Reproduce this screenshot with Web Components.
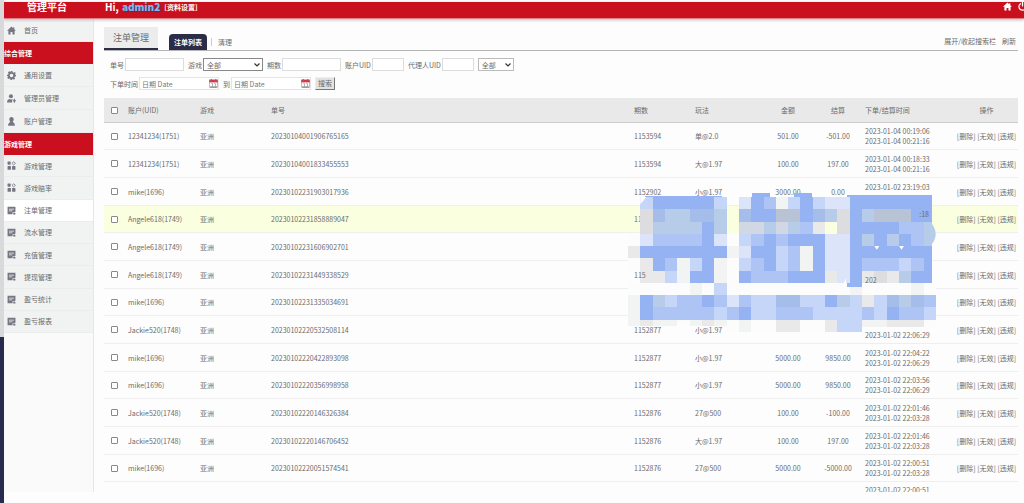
<!DOCTYPE html>
<html lang="zh-CN">
<head>
<meta charset="utf-8">
<title>管理平台</title>
<style>
html, body { margin: 0; height: 100%; }
body { background: #fdfdfd; color: #6b6b6b; font: 7px/10px "Noto Sans CJK SC", "Noto Sans", sans-serif; overflow: hidden; }
</style>
</head>
<body>
<admin-app></admin-app>
<script>
const define = (name, html, setup) => {
  const template = document.createElement('template');
  template.innerHTML = '<style>:host,*{box-sizing:border-box}a{color:inherit;text-decoration:none}</style>' + html;
  customElements.define(name, class extends HTMLElement {
    connectedCallback() {
      if (this.shadowRoot) return;
      this.attachShadow({ mode: 'open' }).append(template.content.cloneNode(true));
      if (setup) setup.call(this, this.shadowRoot);
    }
  });
};

const icons = {
  home: '<path d="M8 1 0 8.500h2.500V15H6.300v-4.500h3.400V15h3.800V8.500H16L13 5.700V2h-2v1.800z"/>',
  gear: '<path fill-rule="evenodd" d="M6.500 0h3l.5 2.300 1.500.7 2-1.300 2 2-1.200 2 .6 1.400L16 6.500v3l-2.200.6-.7 1.400 1.300 2-2 2-2-1.300-1.400.6-.5 2.200h-3L6 13.800l-1.500-.6-2 1.200-2-2 1.200-2-.6-1.400L0 9.500v-3L2.200 6l.6-1.500-1.200-2 2-2 2 1.200L6 2.200zM8 4.800a3.200 3.200 0 1 0 0 6.400 3.200 3.200 0 0 0 0-6.400z"/>',
  userplus: '<circle cx="7" cy="4" r="3.600"/><path d="M0 15c0-4 2-6 5-6.300L7 10l2-1.300c1 .1 1.800.4 2.400.9H9v5.400z"/><path d="M12 8.500h2V11h2v2h-2v2.500h-2V13h-2v-2h2z"/>',
  user: '<path d="M8 0c2.600 0 4 1.800 4 4.200 0 1.800-.6 3-1.600 4 .1 1.200.6 1.600 1.600 2.200 1.400.8 1.900 2.300 2 5.100H2c.1-2.800.6-4.300 2-5.100 1-.6 1.500-1 1.600-2.200-1-1-1.600-2.200-1.600-4C4 1.800 5.400 0 8 0z"/>',
  grid: '<rect x="1" y="1" width="5.500" height="5.500" rx="1"/><path fill="none" stroke="currentColor" stroke-width="1.500" d="M11.800 1.500 15 4.200l-3.200 2.800-3-2.800z"/><rect x="1" y="9" width="6" height="6.500" rx="1"/><rect x="9" y="9" width="6" height="6.500" rx="1"/>',
  note: '<path fill-rule="evenodd" d="M1 1.500h14V10l-2 1-3 .3-.3 3.200H1zM3.500 5v1.200h9V5zm0 3v1.200h6V8z"/><path d="m11 12.500 2-1 2 1.200v2.300h-4z"/>',
  power: '<path fill="none" stroke="currentColor" stroke-width="2.200" stroke-linecap="round" d="M4.500 3a6.300 6.300 0 1 0 7 0M8 0v7"/>',
  calendar: '<path fill="#fff" stroke="#888" d="M1 3h14v12H1z"/><path fill="#d2374a" d="M.5 1h15v5H.5z"/><path fill="#777" d="M4 8h3v5H6V9H4zm5 0h3v5h-1V9H9zM3 0h2v3H3zm8 0h2v3h-2zM2 13.500h12V15H2z"/>'
};
define('ui-icon', '<style>:host{display:block;width:9px;height:9px;flex:none}svg{display:block;width:100%;height:100%}</style><svg viewBox="0 0 16 16" fill="currentColor" aria-hidden="true"></svg>',
  function (root) { root.querySelector('svg').innerHTML = icons[this.getAttribute('name')]; });

define('top-bar', `<style>
:host{display:flex;height:17px;background:#ca101e;color:#fff;border-bottom:1px solid #e0808a;box-shadow:0 1px 3px #bbb;position:relative}
h1{margin:0;width:101px;padding-left:23px;font-size:10px;line-height:10px;font-weight:700}
p{margin:0;flex:1;display:flex;gap:3px;font-size:10px;line-height:10px;font-weight:700}
b{color:#7db8ee;text-shadow:1px 1px 1px #27436d}
.set{font-size:7px;margin-left:1px}
nav{display:flex;gap:6px;flex:none;width:21px;overflow:hidden}
</style><h1>管理平台</h1><p><span>Hi,</span><b>admin2</b><a class="set" href="#">[资料设置]</a></p>
<nav><a href="#" aria-label="首页"><ui-icon name="home"></ui-icon></a><a href="#" aria-label="退出"><ui-icon name="power"></ui-icon></a></nav>`);

define('nav-item', `<style>
:host{display:flex;flex:1;border-bottom:1px solid #ebedec}
:host([active]){background:#fff}
a{display:flex;flex:1;align-items:center;gap:8px;padding-left:3px}
ui-icon{color:#777783}
</style><a href="#"><ui-icon></ui-icon><span><slot></slot></span></a>`,
  function (root) {
    const icon = document.createElement('ui-icon');
    icon.setAttribute('name', this.getAttribute('icon'));
    root.querySelector('ui-icon').replaceWith(icon);
  });

define('side-nav', `<style>
:host{display:block;background:#fafafa;border-right:1px solid #e6e6e6;overflow:hidden}
h2{margin:0;height:22px;background:#ca101e;color:#fff;font-size:7px;line-height:22px;font-weight:700}
div{display:flex;flex-direction:column;background:#f1f3f2}
.one{height:23px}.three{height:69px}.eight{height:178px}
</style>
<div class="one"><nav-item icon="home">首页</nav-item></div>
<h2>综合管理</h2>
<div class="three"><nav-item icon="gear">通用设置</nav-item><nav-item icon="userplus">管理员管理</nav-item><nav-item icon="user">账户管理</nav-item></div>
<h2>游戏管理</h2>
<div class="eight"><nav-item icon="grid">游戏管理</nav-item><nav-item icon="grid">游戏赔率</nav-item><nav-item icon="note" active>注单管理</nav-item><nav-item icon="note">流水管理</nav-item><nav-item icon="note">充值管理</nav-item><nav-item icon="note">提现管理</nav-item><nav-item icon="note">盈亏统计</nav-item><nav-item icon="note">盈亏报表</nav-item></div>`);

define('page-tabs', `<style>
:host{display:flex;align-items:flex-end;height:24px;border-bottom:1px solid #b4b4b4}
h2{margin:0 11px 0 0;width:54px;height:23px;background:#ececec;border-bottom:2px solid #2a2c48;font-size:9px;line-height:22px;font-weight:400;text-align:center}
.on{width:38px;height:16px;background:#2a2c48;color:#fff;border-radius:4px 4px 0 0;line-height:16px;text-align:center;font-weight:700}
.off{margin-left:4px;padding-left:6px;line-height:8px;margin-bottom:4px;border-left:1px solid #ccc}
nav{display:flex;gap:6px;margin-left:auto;padding:0 2px 4px 0}
</style><h2>注单管理</h2><a class="on" href="#">注单列表</a><a class="off" href="#">清理</a>
<nav><a href="#">展开/收起搜索栏</a><a href="#">刷新</a></nav>`);

define('filter-bar', `<style>
:host{display:block;padding:7px 6px 0}
form{display:flex;flex-direction:column;gap:6px;align-items:flex-start}
.row{display:flex;gap:4px;align-items:center}
label{display:flex;align-items:center;gap:1px}
input,select,button{font:inherit;color:inherit;height:13px;border:1px solid #ddd;border-radius:0;background:#fff;padding:0 3px;margin:0;outline:0}
input{width:59px}.s input{width:32px}
input::placeholder{color:#777;opacity:1}
select{appearance:none;width:60px;border-color:#888;background:#fff url("data:image/svg+xml,%3Csvg xmlns='http://www.w3.org/2000/svg' viewBox='0 0 6 4'%3E%3Cpath d='M.5.5 3 3 5.500.5' fill='none' stroke='%23333' stroke-width='1.200'/%3E%3C/svg%3E") right 2px center/6px 4px no-repeat}
.t{width:36px;border-color:#bbb}
.date{display:flex;align-items:center;width:80px;border:1px solid #e4e4e4;background:#fff}
.date input{flex:1;width:0;height:11px;border:0;padding:0 2px}
button{width:20px;padding:0;background:#e2e2e2;border-color:#eee #777 #777 #eee;line-height:11px}
</style><form onsubmit="return false"><div class="row">
<label>单号<input></label><label>游戏<select><option>全部</option></select></label><label>期数<input></label>
<label class="s">账户UID<input></label><label class="s">代理人UID<input></label><select class="t" aria-label="状态"><option>全部</option></select></div>
<div class="row"><label>下单时间<span class="date"><input placeholder="日期 Date"><ui-icon name="calendar"></ui-icon></span></label>
<label>到<span class="date"><input placeholder="日期 Date"><ui-icon name="calendar"></ui-icon></span></label><button>搜索</button></div></form>`);

const rows = [
  ['12341234(1751)', '20230104001906765165', '1153594', '单@2.0', '501.00', '-501.00', '2023-01-04 00:19:06', '2023-01-04 00:21:16'],
  ['12341234(1751)', '20230104001833455553', '1153594', '大@1.97', '100.00', '197.00', '2023-01-04 00:18:33', '2023-01-04 00:21:16'],
  ['mike(1696)', '20230102231903017936', '1152902', '小@1.97', '3000.00', '0.00', '2023-01-02 23:19:03', ''],
  ['Angele618(1749)', '20230102231858889047', '11', '', '', '', '<span class="end">:18</span>', ''],
  ['Angele618(1749)', '20230102231606902701', '', '', '', '', '', ''],
  ['Angele618(1749)', '20230102231449338529', '<span class="over">115</span>', '', '', '', '', '<span class="over">202</span>'],
  ['mike(1696)', '20230102231335034691', '', '', '', '', '', ''],
  ['Jackie520(1748)', '20230102220532508114', '1152877', '小@1.97', '', '', '', '2023-01-02 22:06:29'],
  ['mike(1696)', '20230102220422893098', '1152877', '小@1.97', '5000.00', '9850.00', '2023-01-02 22:04:22', '2023-01-02 22:06:29'],
  ['mike(1696)', '20230102220356998958', '1152877', '小@1.97', '5000.00', '9850.00', '2023-01-02 22:03:56', '2023-01-02 22:06:29'],
  ['Jackie520(1748)', '20230102220146326384', '1152876', '27@500', '100.00', '-100.00', '2023-01-02 22:01:46', '2023-01-02 22:03:28'],
  ['Jackie520(1748)', '20230102220146706452', '1152876', '大@1.97', '100.00', '197.00', '2023-01-02 22:01:46', '2023-01-02 22:03:28'],
  ['mike(1696)', '20230102220051574541', '1152876', '27@500', '5000.00', '-5000.00', '2023-01-02 22:00:51', '2023-01-02 22:03:28']
];
define('bet-table', `<style>
:host{display:block}
table{width:100%;table-layout:fixed;border-collapse:separate;border-spacing:0}
th,td{padding:0;font-weight:400;text-align:left;white-space:nowrap;height:28px;border-bottom:1px solid #efefef}
th{height:25px;background:#e9e9e9;border-color:#ccc}
tbody tr:nth-child(3n+1) td{height:27px}
tbody tr:nth-child(4) td{background:#faffe0}
tbody tr:last-child td{border:0;vertical-align:top;padding-top:3px}
.m,th.m{text-align:center}
.r{padding-right:3px}
.over,.end{position:relative;z-index:2}
.end{display:block;width:64px;text-align:right}
input{appearance:none;display:block;width:7px;height:7px;margin:0 0 0 7px;border:1px solid #888;border-radius:1px;background:#fff}
.c{width:24px}.u{width:72px}.g{width:71px}.p{width:61px}.w{width:67px}.a{width:52px}.s{width:51px}.d{width:90px}.o{width:63px}
time{display:block;height:10px}
</style><table><colgroup><col class="c"><col class="u"><col class="g"><col><col class="p"><col class="w"><col class="a"><col class="s"><col class="d"><col class="o"></colgroup>
<thead><tr><th><input type="checkbox" aria-label="全选"></th><th>账户(UID)</th><th>游戏</th><th>单号</th><th>期数</th><th>玩法</th><th class="m">金额</th><th class="m r">结算</th><th>下单/结算时间</th><th class="m">操作</th></tr></thead><tbody></tbody></table>`,
  function (root) {
    root.querySelector('tbody').innerHTML = rows.map(r => `<tr><td><input type="checkbox" aria-label="${r[0]}"></td><td>${r[0]}</td><td>亚洲</td><td>${r[1]}</td><td>${r[2]}</td><td>${r[3]}</td><td class="m">${r[4]}</td><td class="m r">${r[5]}</td><td><time>${r[6]}</time><time>${r[7]}</time></td><td class="m"><a href="#">[删除]</a> <a href="#">[无效]</a> <a href="#">[违规]</a></td></tr>`).join('') +
      '<tr><td colspan="8"></td><td><time>2023-01-02 22:00:51</time></td><td></td></tr>';
  });

/* Pixelated stamp: one letter per tile, looked up in the tint table. */
const tints = { B: '#95b2f2', M: '#adc4f5', L: '#c6d6f9', C: '#dbe4f8', G: '#b7cce9', D: '#a5bee9', H: '#b9c3d6', N: '#d2d8e3', S: '#dddddf', E: '#e9e9ea', P: '#f2f3f3', W: '#fcfcfc', Y: '#faffe0' };
const tiles = [
  '.LBBBBBL.CBMPLBLCCBBBBBBB',
  '.SDGGDDGYDBBHHBDGSBGHHHBB',
  '.SGGGGBGYNNGNGMEYSBBBBMMG',
  'WCMMMMBCWLMBMBBBCCBGBGBMG',
  'EBBBBBBBPCBBLMBPBCCBBBBBBB',
  'WEBMPLBPWLMBLMPBCCBMMMLMB',
  '.EELPBBPWBMMMBBBECBESEGBB',
  'WWWWWPWLWWWWWWWWWWPWWWWPW',
  'PBGLMMBMCMLLDDLLBGLELDGDM',
  'PBMMMMMLMBLLMMMLLLLMLBMML',
  'PEPPWPEPWPWWEEWWELLPPEEEW'
];
tiles[4] = 'EBBBBBBBPCBBLMPBCCBBBBBBB';
define('pixel-stamp', `<style>:host{display:block}svg{display:block;width:100%;height:100%;overflow:visible}</style><svg viewBox="0 0 25 11" preserveAspectRatio="none" shape-rendering="crispEdges" aria-hidden="true"></svg>`,
  function (root) {
    root.querySelector('svg').innerHTML = tiles.map((line, y) => [...line].map((k, x) => {
      if (!tints[k]) return '';
      const w = x === 24 && y < 7 ? .7 : 1;
      const h = y === 10 && x < 8 ? .5 : y === 10 && x > 18 ? .6 : 1;
      return `<rect x="${x}" y="${y}" width="${w}" height="${h}" fill="${tints[k]}"/>`;
    }).join('')).join('') +
    '<path fill="#95b2f2" d="M1.400-.1h6.200V0H1.400zM10.100-.3h1.400V0h-1.400zM13.500-.3h1.400V0h-1.400zM17.800-.15h6.900V0h-6.900zM17.800 7H19v.3h-1.200z"/>' +
    '<g shape-rendering="auto"><path fill="#b7cce9" d="M24.600 2.100c.5.600.5 1.300 0 1.800z"/><path fill="#fff" d="M20 4h.4l-.2.300zM22 4h.4l-.2.300zM1 0v.6L1.500 0zM17.500 7l.2-.4V7z"/></g>';
  });

define('admin-app', `<style>
:host{display:grid;grid-template:auto 1fr/90px 1fr;height:100vh;padding:2px 0 11px;border-left:4px solid #d9d9dc;border-image:linear-gradient(#d9d9dc 67%,#272b4d 67%) 1;border-width:0 0 0 4px;background:#fdfdfd;overflow:hidden}
top-bar{grid-column:1/3}
side-nav{min-height:0}
main{min-width:0;min-height:0;overflow:hidden;padding:8px 6px 0 10px}
.data{margin-top:8px;position:relative}
pixel-stamp{position:absolute;right:82px;top:99px;width:308px;height:135px}
</style><top-bar></top-bar><side-nav></side-nav>
<main><page-tabs></page-tabs><filter-bar></filter-bar><div class="data"><bet-table></bet-table><pixel-stamp></pixel-stamp></div></main>`);
</script>
</body>
</html>
